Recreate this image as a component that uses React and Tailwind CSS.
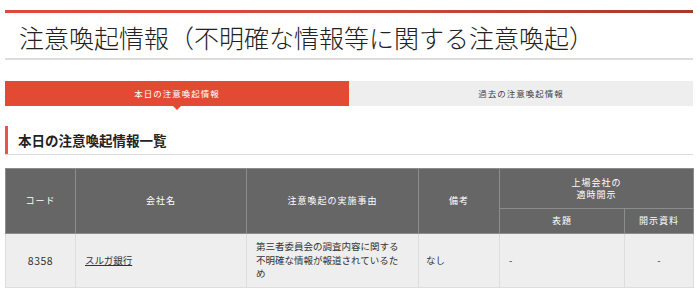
import React from "react";

const font = { fontFamily: '"Noto Sans CJK JP", "Noto Sans", sans-serif' };

export default function App() {
  return (
    <div className="w-[700px] h-[298px] bg-white overflow-hidden text-[#333]" style={font}>
      <div className="ml-[5px] w-[688px] pt-[10px]">
        {/* Title */}
        <div className="h-[3px] bg-gradient-to-r from-[#dc4a3a] via-[#d5483a] to-[#a8382e]" />
        <h1 className="h-[47px] border-b-2 border-[#dddddd] pl-[14px] pt-[7px] text-[25px] leading-[34px] font-light text-[#222]">
          注意喚起情報（不明確な情報等に関する注意喚起）
        </h1>

        {/* Tabs */}
        <div className="mt-[21px] flex h-[25px] text-[8.5px] tracking-[1px]">
          <div className="relative flex w-[344px] items-center justify-center bg-[#e34a33] text-white">
            本日の注意喚起情報
            <span className="absolute left-1/2 top-full -ml-[4px] border-x-[4px] border-t-[4px] border-x-transparent border-t-[#e34a33]" />
          </div>
          <div className="flex flex-1 items-center justify-center bg-[#eeeeee] text-[#444]">
            過去の注意喚起情報
          </div>
        </div>

        {/* Section heading */}
        <div className="mt-[20px] border-b border-[#dddddd]">
          <h2 className="h-[28px] border-l-[3px] border-[#e3564a] pl-[10px] text-[13.5px] font-bold leading-[28px] text-[#222]">
            本日の注意喚起情報一覧
          </h2>
        </div>

        {/* Table */}
        <table className="mt-[13px] w-[688px] table-fixed border-collapse text-[9px] tracking-[1px]">
          <colgroup>
            <col className="w-[70px]" />
            <col className="w-[171px]" />
            <col className="w-[172px]" />
            <col className="w-[81px]" />
            <col className="w-[125px]" />
            <col className="w-[69px]" />
          </colgroup>
          <thead className="bg-[#666666] text-white">
            <tr className="h-[40px]">
              <th rowSpan={2} className="border border-[#8c8c8c] font-normal">コード</th>
              <th rowSpan={2} className="border border-[#8c8c8c] font-normal">会社名</th>
              <th rowSpan={2} className="border border-[#8c8c8c] font-normal">注意喚起の実施事由</th>
              <th rowSpan={2} className="border border-[#8c8c8c] font-normal">備考</th>
              <th colSpan={2} className="border border-[#8c8c8c] font-normal leading-[12px]">
                <div>上場会社の</div>
                <div>適時開示</div>
              </th>
            </tr>
            <tr className="h-[25px]">
              <th className="border border-[#8c8c8c] font-normal">表題</th>
              <th className="border border-[#8c8c8c] font-normal">開示資料</th>
            </tr>
          </thead>
          <tbody className="bg-[#eeeeee] text-[9.5px] tracking-normal text-[#333]">
            <tr className="h-[54px]">
              <td className="border border-[#dddddd] text-center text-[10.5px] tracking-[0.5px]">8358</td>
              <td className="border border-[#dddddd] px-[9px]">
                <span className="underline">スルガ銀行</span>
              </td>
              <td className="border border-[#dddddd] pl-[9px] pr-[14px] leading-[13.5px]">
                第三者委員会の調査内容に関する不明確な情報が報道されているため
              </td>
              <td className="border border-[#dddddd] px-[7px]">なし</td>
              <td className="border border-[#dddddd] px-[9px]">-</td>
              <td className="border border-[#dddddd] text-center">-</td>
            </tr>
          </tbody>
        </table>
      </div>
    </div>
  );
}
